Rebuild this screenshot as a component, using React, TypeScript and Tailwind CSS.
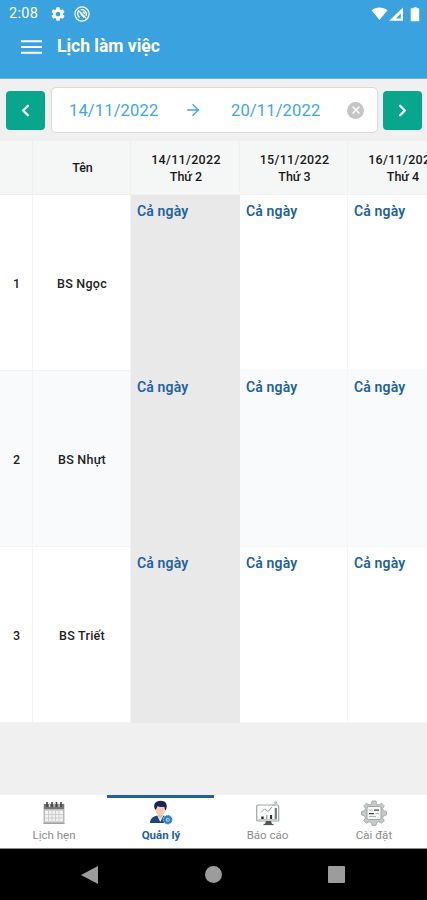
import { ArrowRight, ChevronLeft, ChevronRight, X } from "lucide-react";

type Day = {
  date: string;
  weekday: string;
};

const days: Day[] = [
  { date: "14/11/2022", weekday: "Thứ 2" },
  { date: "15/11/2022", weekday: "Thứ 3" },
  { date: "16/11/2022", weekday: "Thứ 4" },
];

const doctors = ["BS Ngọc", "BS Nhựt", "BS Triết"];

const tabs = [
  { label: "Lịch hẹn", Icon: CalendarIcon },
  { label: "Quản lý", Icon: ManagerIcon },
  { label: "Báo cáo", Icon: ReportIcon },
  { label: "Cài đặt", Icon: SettingsIcon },
];

const gridClass = "grid w-[457px] grid-cols-[33px_98px_109px_108px_109px]";

function GearIcon() {
  return (
    <svg className="h-[16px] w-[16px]" fill="#fff" viewBox="0 0 24 24">
      <path d="M19.43 12.98c.04-.32.07-.64.07-.98s-.03-.66-.07-.98l2.11-1.65c.19-.15.24-.42.12-.64l-2-3.46c-.12-.22-.39-.3-.61-.22l-2.49 1c-.52-.4-1.08-.73-1.69-.98l-.38-2.65C14.46 2.18 14.25 2 14 2h-4c-.25 0-.46.18-.49.42l-.38 2.65c-.61.25-1.17.59-1.69.98l-2.49-1c-.23-.09-.49 0-.61.22l-2 3.46c-.13.22-.07.49.12.64l2.11 1.65c-.04.32-.07.65-.07.98s.03.66.07.98l-2.11 1.65c-.19.15-.24.42-.12.64l2 3.46c.12.22.39.3.61.22l2.49-1c.52.4 1.08.73 1.69.98l.38 2.65c.03.24.24.42.49.42h4c.25 0 .46-.18.49-.42l.38-2.65c.61-.25 1.17-.59 1.69-.98l2.49 1c.23.09.49 0 .61-.22l2-3.46c.12-.22.07-.49-.12-.64l-2.11-1.65zM12 15.5c-1.93 0-3.5-1.57-3.5-3.5s1.57-3.5 3.5-3.5 3.5 1.57 3.5 3.5-1.57 3.5-3.5 3.5z" />
    </svg>
  );
}

function BadgeIcon() {
  return (
    <svg className="h-[16px] w-[16px]" fill="none" stroke="#fff" viewBox="0 0 16 16">
      <circle cx="8" cy="8" r="7.1" strokeWidth="1.2" />
      <path d="M5.6 11.4A4.3 4.3 0 0 1 4.6 5M6.6 3.9a4.4 4.4 0 0 1 5.4 6M4.2 4.2l8 8M6.6 7.2l3.6 4.4M9 5.6l2 2.2" strokeWidth="1.4" />
    </svg>
  );
}

function CalendarIcon() {
  return (
    <svg className="h-[26px] w-[26px]" viewBox="0 0 26 26">
      <rect fill="#b9b9b9" height="20" width="21" x="2.5" y="4" />
      <rect fill="#f2f2f2" height="11" width="18" x="4" y="10.5" />
      <rect fill="#777" height="5" width="20" x="3" y="4" />
      <path d="M6 2v5M11 2v5M15.500 2v5M20 2v5" stroke="#444" strokeWidth="1.6" />
      <path d="M8.500 3v4M13.200 3v4M18 3v4" stroke="#d5d5d5" strokeWidth="1" />
      <path d="M7.500 11v10M11 11v10M14.500 11v10M18 11v10M4 14.500h18M4 18h18" stroke="#cdcdcd" strokeWidth="1" />
      <path d="M2.500 23.500h21" stroke="#a2a2a2" />
    </svg>
  );
}

function ManagerIcon() {
  return (
    <svg className="h-[26px] w-[26px]" viewBox="0 0 26 26">
      <path d="M2 23c.3-4 2.200-6.200 6.300-7.200h8c3.200.8 4.800 3.200 5 7.200z" fill="#1d4481" />
      <path d="m9.200 15.500 3.100 6.500 3.200-6.500z" fill="#eaf2fa" />
      <path d="M10 12h4.600v4.200l-2.300 2.200-2.300-2.200z" fill="#eeb79e" />
      <ellipse cx="12.300" cy="9.300" fill="#f8cbb2" rx="4.900" ry="6.200" />
      <path d="M7 9.500C4.900 4.200 7.300.7 12.500.7c4.900 0 7.600 3.200 5.700 8.800l-1 1-.9-3.700c-3 .5-5.500 0-6.700-.8L8 9.500z" fill="#1b2355" />
      <circle cx="19.800" cy="19.700" fill="#2f80c4" r="4.600" stroke="#c9e4f8" strokeDasharray="1.500 1" />
      <circle cx="19.800" cy="19.700" fill="#a9d6f4" r="2" />
      <path d="M19 19.700h2M20 18.700v2" stroke="#2575b8" strokeWidth=".7" />
    </svg>
  );
}

function ReportIcon() {
  return (
    <svg className="h-[26px] w-[26px]" fill="none" viewBox="0 0 26 26">
      <rect height="16" rx="1" stroke="#9fa5a5" strokeWidth="1.200" width="22" x="1.700" y="5" />
      <path d="M3 19.500h19.500" stroke="#c5caca" />
      <path d="M6 12.500 9.500 9l3.500 2.500 4-4.500" stroke="#999" />
      <path d="m17 6 4-3M19 2.500l2.500-.5.500 2.500" stroke="#b0b0b0" />
      <path d="M7.500 19v-2.500" stroke="#222" strokeWidth="2.400" />
      <path d="M11.800 19v-4" stroke="#aaa" strokeWidth="1.600" />
      <path d="M16 19v-4" stroke="#333" strokeWidth="2.200" />
      <path d="M20.800 19V8" stroke="#6f7d7b" strokeWidth="2.200" />
      <path d="M11 21h5l1 3h-7z" fill="#555" />
      <path d="M8.500 24.500h10" stroke="#555" strokeWidth="1.200" />
    </svg>
  );
}

function SettingsIcon() {
  return (
    <svg className="h-[26px] w-[26px]" fill="none" viewBox="0 0 26 26">
      <path
        d="M11 1h4l.7 3 2.200.9 2.700-1.700 2.700 2.700-1.700 2.600.9 2.300 3 .7v3.500l-3 .8-.9 2.300 1.700 2.600-2.700 2.600-2.700-1.600-2.200.8-.7 3h-4l-.7-3-2.200-.8-2.700 1.600-2.700-2.600 1.700-2.600-.9-2.300-3-.8v-3.500l3-.7.9-2.300-1.700-2.600 2.700-2.700 2.700 1.700 2.200-.9z"
        fill="#c6c9c9"
        stroke="#a2a6a6"
        strokeWidth=".8"
      />
      <rect fill="#f5f5f5" height="13" rx="1.500" stroke="#999d9d" strokeWidth=".9" width="14" x="6" y="6.500" />
      <path d="M13 10.200h5M8 13.600h5" stroke="#444" strokeWidth="1.300" />
      <path d="M8 10.200h3.500M14.500 13.600H18M8 16.500h7" stroke="#aaa" strokeWidth=".9" />
    </svg>
  );
}

function StatusBar() {
  return (
    <div className="flex h-[28px] items-center justify-between pl-[9px] pr-[7px]">
      <div className="flex items-center">
        <span className="w-[41px] text-[14.5px] tracking-[0.3px]">2:08</span>
        <GearIcon />
        <span className="ml-[8px]">
          <BadgeIcon />
        </span>
      </div>
      <svg className="h-[15px] w-[50px]" fill="#fff" viewBox="0 0 50 15">
        <path d="M1.500 3.300C6-.4 13-.4 17.500 3.300L9.500 13z" />
        <path d="M33 .5v13.300H19.200zM30.800 6.500l-4.800 5h4.800z" fillRule="evenodd" />
        <path d="M41.700 1.300h2V.3h3v1h1.500c.7 0 1 .3 1 1v10.900c0 .7-.3 1-1 1h-6.500c-.7 0-1-.3-1-1V2.300c0-.7.3-1 1-1z" />
      </svg>
    </div>
  );
}

function DateRange() {
  return (
    <div className="flex h-[62px] items-center gap-[6px] bg-[#f0f0f0] px-[6px]">
      <button className="flex h-[39px] w-[39px] shrink-0 items-center justify-center rounded-[4px] bg-[#08a68c] text-white" type="button">
        <ChevronLeft className="h-[19px] w-[19px]" strokeWidth={3} />
      </button>
      <div className="flex h-[46px] w-[327px] shrink-0 items-center rounded-[5px] border border-[#d9d9d9] bg-white pl-[17px] pr-[13px] text-[16.5px] text-[#40a4f4]">
        <span className="w-[90px] pt-[2px] tracking-[0.15px]">14/11/2022</span>
        <ArrowRight className="ml-[25px] h-[18px] w-[18px]" strokeWidth={2} />
        <span className="ml-[29px] w-[90px] pt-[2px] tracking-[0.15px]">20/11/2022</span>
        <span className="ml-auto flex h-[17px] w-[17px] items-center justify-center rounded-full bg-[#c5c5c5] text-white">
          <X className="h-[12px] w-[12px]" strokeWidth={3} />
        </span>
      </div>
      <button className="-ml-px flex h-[39px] w-[39px] shrink-0 items-center justify-center rounded-[4px] bg-[#08a68c] text-white" type="button">
        <ChevronRight className="h-[19px] w-[19px]" strokeWidth={3} />
      </button>
    </div>
  );
}

function Schedule() {
  return (
    <div className="h-[582px] overflow-hidden text-[#222]">
      <div className={`${gridClass} h-[54px] bg-[#f5f6f6] text-[12.5px] font-medium text-[#1a1a1a]`}>
        <div className="border-r border-b border-[#eef0f0]" />
        <div className="flex items-center justify-center border-r border-b border-[#eef0f0] pt-[2px] pl-[2px]">Tên</div>
        {days.map((day) => (
          <div
            className="flex flex-col items-center justify-center border-r border-b border-[#f0f2f2] pl-[2px] leading-[17px]"
            key={day.date}
          >
            <span className="tracking-[0.3px]">{day.date}</span>
            <span>{day.weekday}</span>
          </div>
        ))}
      </div>
      {doctors.map((doctor, row) => (
        <div className={`${gridClass} h-[176px] text-[12.5px] font-medium ${row % 2 ? "bg-[#f8fafc]" : "bg-white"}`} key={doctor}>
          <div className="flex items-center justify-center border-r border-b border-[#f1f3f4] pt-[3px] pl-px">{row + 1}</div>
          <div className="flex items-center justify-center border-r border-b border-[#f1f3f4] pt-[3px] pl-px tracking-[0.25px]">
            {doctor}
          </div>
          {days.map((day, col) => (
            <div
              className={`px-[6px] pt-[6px] text-[14px] leading-[20px] font-semibold tracking-[0.15px] text-[#1e61a3] ${
                col === 0 ? "bg-[#e9e9e9]" : "border-r border-b border-[#f4f6f7]"
              }`}
              key={day.date}
            >
              Cả ngày
            </div>
          ))}
        </div>
      ))}
    </div>
  );
}

export default function App() {
  return (
    <div className="flex h-[900px] w-[427px] flex-col overflow-hidden bg-[#f0f0f0] font-['Roboto',sans-serif]">
      <header className="h-[79px] border-b border-[#6fb0dc] bg-[#39a2df] text-white">
        <StatusBar />
        <div className="flex h-[37px] items-center pl-[21px]">
          <svg className="h-[14px] w-[21px]" viewBox="0 0 21 14">
            <path d="M0 1.200h21M0 7h21M0 12.800h21" stroke="#fff" strokeWidth="2" />
          </svg>
          <h1 className="ml-[15px] text-[17.5px] font-bold">Lịch làm việc</h1>
        </div>
      </header>

      <DateRange />
      <Schedule />

      <nav className="mt-auto grid h-[54px] grid-cols-[107px_107px_106px_107px] border-b border-[#8c8c8c] bg-white">
        {tabs.map(({ label, Icon }, index) => {
          const active = index === 1;

          return (
            <button
              className={`flex flex-col items-center border-t-3 pt-[2px] pl-px text-[11.5px] leading-[16px] ${
                active ? "border-[#2560a0] font-bold text-[#1d62a8]" : "border-white text-[#8c8c8c]"
              }`}
              key={label}
              type="button"
            >
              <Icon />
              <span className="mt-px">{label}</span>
            </button>
          );
        })}
      </nav>

      <div className="flex h-[51px] items-center bg-black">
        <svg className="ml-[81px] h-[18px] w-[17px]" viewBox="0 0 17 18">
          <path d="M0 9 17 0v18z" fill="#9c9c9c" />
        </svg>
        <span className="ml-[107px] h-[17px] w-[17px] rounded-full bg-[#9c9c9c]" />
        <span className="ml-[106px] h-[17px] w-[17px] rounded-[1px] bg-[#9c9c9c]" />
      </div>
    </div>
  );
}
